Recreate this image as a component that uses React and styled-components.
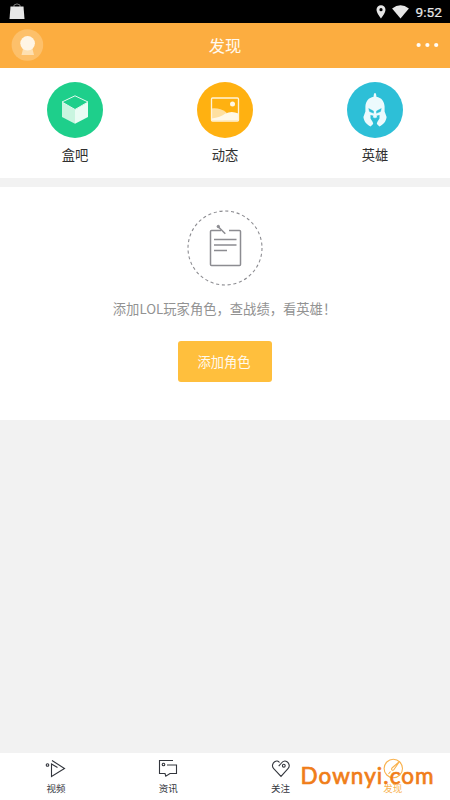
import React from 'react';
import styled, { createGlobalStyle } from 'styled-components';

const GlobalStyle = createGlobalStyle`
  * { box-sizing: border-box; }
  body { margin: 0; background: #f2f2f2; font-family: "Noto Sans CJK SC", sans-serif; }
  svg { display: block; flex: none; }
`;
const Screen = styled.main`
  width: 450px;
  height: 800px;
  display: flex;
  flex-direction: column;
  background: #f2f2f2;
  overflow: hidden;
`;
const StatusBar = styled.div`
  height: 23px;
  flex: none;
  background: #000;
  display: flex;
  align-items: center;
  justify-content: space-between;
  padding: 0 8px;
`;
const StatusGroup = styled.div`
  display: flex;
  align-items: center;
`;
const SignalIcons = styled(StatusGroup)`
  gap: 6px;
`;
const Clock = styled.span`
  margin-left: 6px;
  color: #e8e8e8;
  font: 400 13.7px/20px Roboto, sans-serif;
  -webkit-text-stroke: 0.2px #e8e8e8;
`;
const Header = styled.header`
  height: 45px;
  flex: none;
  background: #fcad40;
  display: grid;
  grid-template-columns: 1fr auto 1fr;
  align-items: center;
  padding: 0 11px;
`;
const Title = styled.h1`
  margin: 0 0 2px;
  color: #fffaf0;
  font-size: 16.3px;
  line-height: 24px;
  font-weight: 400;
`;
const MoreButton = styled.button`
  justify-self: end;
  border: 0;
  padding: 0;
  margin-bottom: 2px;
  background: none;
`;
const Shortcuts = styled.section`
  height: 110px;
  flex: none;
  background: #fff;
  display: grid;
  grid-template-columns: repeat(3, 1fr);
  padding-top: 14px;
`;
const Shortcut = styled.a`
  display: flex;
  flex-direction: column;
  align-items: center;
`;
const Badge = styled.span`
  width: 56px;
  height: 56px;
  border-radius: 50%;
  background: ${(p) => p.$color};
`;
const ShortcutLabel = styled.span`
  margin-top: 7px;
  color: #303030;
  font-size: 13.3px;
  line-height: 20px;
`;
const RolePanel = styled.section`
  height: 233px;
  flex: none;
  margin-top: 9px;
  padding: 22px 1px 0 0;
  background: #fff;
  display: flex;
  flex-direction: column;
  align-items: center;
`;
const Hint = styled.p`
  margin: 13px 0 0;
  color: #929292;
  font-size: 13.3px;
  line-height: 20px;
  white-space: nowrap;
`;
const AddButton = styled.button`
  width: 94px;
  height: 41px;
  margin-top: 22px;
  border: 0;
  border-radius: 3px;
  padding: 0 1px 0 0;
  background: #ffbf3d;
  color: #fffaf0;
  font: 400 13.3px/20px "Noto Sans CJK SC", sans-serif;
`;
const TabBar = styled.nav`
  position: relative;
  height: 47px;
  flex: none;
  margin-top: auto;
  padding-right: 1px;
  background: #fff;
  display: grid;
  grid-template-columns: repeat(4, 1fr);
`;
const Tab = styled.a`
  display: flex;
  flex-direction: column;
  align-items: center;
  padding-top: 4px;
  color: ${(p) => (p.$active ? '#f9b24e' : '#33363d')};
`;
const TabLabel = styled.span`
  font-size: 9.5px;
  line-height: 14px;
`;
const Watermark = styled.span`
  position: absolute;
  left: 300.5px;
  top: 8px;
  color: #f07d18;
  font: 400 22.5px/30px Lato, sans-serif;
  letter-spacing: 1.05px;
  -webkit-text-stroke: 0.7px #f07d18;
  white-space: nowrap;
`;

const BagIcon = () => (
  <svg width="18" height="20" viewBox="0 0 18 20">
    <path d="M6 5V3q3-2.200 6 0v2" fill="none" stroke="#777" />
    <path d="M2.500 4.500h13l1 12.500h-15z" fill="#e6e6e6" />
  </svg>
);
const PinIcon = () => (
  <svg width="10" height="14" viewBox="0 0 10 14">
    <path fillRule="evenodd" d="M5 .2A4.5 4.5 0 0 0 .5 4.7C.5 8 5 13.4 5 13.4S9.5 8 9.5 4.7A4.5 4.5 0 0 0 5 .2m0 2.900a1.600 1.600 0 1 1 0 3.200 1.600 1.600 0 0 1 0-3.200" fill="#e6e6e6" />
  </svg>
);
const WifiIcon = () => (
  <svg width="18" height="14" viewBox="0 0 18 14">
    <path d="M.1 3.400Q8.500-2.800 16.900 3.400L8.500 13.500z" fill="#e6e6e6" />
  </svg>
);
const Avatar = () => (
  <svg width="33" height="33" viewBox="0 0 33 33">
    <circle cx="16.400" cy="16" r="15.800" fill="#fdc06a" />
    <path d="M12 20h9.500l1.500 6H10.500z" fill="#fee0b1" />
    <circle cx="16.600" cy="14.300" r="7.300" fill="#fff5e5" />
  </svg>
);
const Dots = () => (
  <svg width="23" height="6" viewBox="0 0 23 6">
    <g fill="#fffdf8">
      <circle cx="2.600" cy="3" r="2.100" />
      <circle cx="11.400" cy="3" r="2.100" />
      <circle cx="20.200" cy="3" r="2.100" />
    </g>
  </svg>
);
const BadgeSvg = styled.svg.attrs({ width: 56, height: 56, viewBox: '0.5 0.5 56 56' })``;
const CubeIcon = () => (
  <BadgeSvg>
    <path d="M15.500 20.500 28.500 28v14.200l-13-6.700z" fill="#c9f5e0" />
    <path d="M41.500 20.500 28.500 28v14.200l13-6.700z" fill="#eafcf4" />
    <path d="m15.500 20.500 13-6.200 13 6.200-13 7.500z" fill="#1ecf8b" stroke="#e2faef" strokeLinejoin="round" />
  </BadgeSvg>
);
const PictureIcon = () => (
  <BadgeSvg>
    <path d="M15 27q8-1 15 4l-3 8H15z" fill="#ffe0a0" />
    <path d="M15 37q9-1 14-5 6-3 13 0v7H15z" fill="#fff8e8" />
    <rect x="15" y="16.500" width="27" height="23" rx="1" fill="none" stroke="#fff3d9" strokeWidth="1.300" />
    <circle cx="36" cy="22.600" r="2.500" fill="#fff8e8" />
  </BadgeSvg>
);
const HelmetIcon = () => (
  <BadgeSvg>
    <path d="M28.500 11.500c1 0 1.400 2 1.400 3.700 5 .9 8 4.600 8.200 9.800v5l2 5.500c-.5 4.500-3.200 7.500-7.200 9.500l-3-3h-2.800l-3 3c-4-2-6.700-5-7.200-9.500l2-5.500v-5c.2-5.200 3.200-8.900 8.200-9.800 0-1.700.4-3.700 1.400-3.700" fill="#ecfafd" />
    <path d="m22.200 27 4.800 2.500v2.200l-4-1.600zM34.800 27 30 29.500v2.200l4-1.600z" fill="#2dbfd7" stroke="#2dbfd7" strokeWidth=".4" />
    <path d="M24 33.500 27 34.200l-.8 1.700h1.500l.8 1 .8-1h1.500l-.8-1.700 3-.7v3.500l-2.200 3.500-1 3.500h-2.600l-1-3.500-2.200-3.500z" fill="#2dbfd7" />
  </BadgeSvg>
);
const NoteIcon = () => (
  <svg width="77" height="77" viewBox="0 0 77 77" fill="none" stroke="#8c8c91">
    <circle cx="39" cy="39" r="37" strokeWidth="1.100" strokeDasharray="3.100 2.710" />
    <path d="M35 21.500H25.500q-1 0-1 1v33q0 1 1 1h28q1 0 1-1v-33q0-1-1-1H43" strokeWidth="1.500" />
    <path d="M28 30.500H50.500M28 36H50.500M28 41.500H41" strokeWidth="1.300" />
    <path d="m32.300 17.700 7 7" strokeWidth="1.500" />
    <circle cx="32.300" cy="17.500" r="1.200" fill="#8c8c91" />
  </svg>
);
const TabSvg = styled.svg.attrs({ width: 24, height: 24, viewBox: '0 0 24 24' })`
  fill: none;
  stroke: currentColor;
  stroke-width: 1.1;
`;
const VideoShape = () => (
  <>
    <circle cx="3.500" cy="8" r="1.300" />
    <path d="M13.500 10.500 7.500 7v12.500L20.500 11.500 8 3.500" />
  </>
);
const NewsShape = () => (
  <>
    <circle cx="7.500" cy="7.500" r="1.300" />
    <path d="M17 3.500H3.500v13H9l.8 2.700 4.200-2.700h6.500V8H11" />
  </>
);
const HeartShape = () => (
  <>
    <circle cx="14.800" cy="8.700" r="1.400" />
    <path d="M9.700 9.200 12 6.500c2-2.700 4.200-3 6-1.800 2.500 1.800 3 4.800 1 7L12 19.400 4.700 11.700c-2-2.200-1.500-5.200 1-7 1.700-1.200 3.600-1 4.800.8" />
  </>
);
const CompassShape = () => (
  <>
    <circle cx="12.300" cy="11.500" r="9.200" />
    <path d="m18.500 4.500-7.500 6.500q-1 1.200 0 2 1.200.6 2-.5zM9.500 14.500l-2 2.500" />
  </>
);

const tabs = [
  ['视频', VideoShape],
  ['资讯', NewsShape],
  ['关注', HeartShape],
  ['发现', CompassShape],
];
const shortcuts = [
  ['盒吧', '#1ecf8b', CubeIcon],
  ['动态', '#ffb111', PictureIcon],
  ['英雄', '#2dbfd7', HelmetIcon],
];

export default function App() {
  return (
    <Screen>
      <GlobalStyle />
      <StatusBar>
        <BagIcon />
        <StatusGroup>
          <SignalIcons><PinIcon /><WifiIcon /></SignalIcons>
          <Clock>9:52</Clock>
        </StatusGroup>
      </StatusBar>
      <Header>
        <Avatar />
        <Title>发现</Title>
        <MoreButton aria-label="更多"><Dots /></MoreButton>
      </Header>
      <Shortcuts>
        {shortcuts.map(([label, color, Icon]) => (
          <Shortcut key={label}>
            <Badge $color={color}><Icon /></Badge>
            <ShortcutLabel>{label}</ShortcutLabel>
          </Shortcut>
        ))}
      </Shortcuts>
      <RolePanel>
        <NoteIcon />
        <Hint>添加LOL玩家角色，查战绩，看英雄！</Hint>
        <AddButton>添加角色</AddButton>
      </RolePanel>
      <TabBar>
        {tabs.map(([label, Shape], i) => (
          <Tab key={label} $active={i === 3}>
            <TabSvg><Shape /></TabSvg>
            <TabLabel>{label}</TabLabel>
          </Tab>
        ))}
        <Watermark>Downyi.com</Watermark>
      </TabBar>
    </Screen>
  );
}
